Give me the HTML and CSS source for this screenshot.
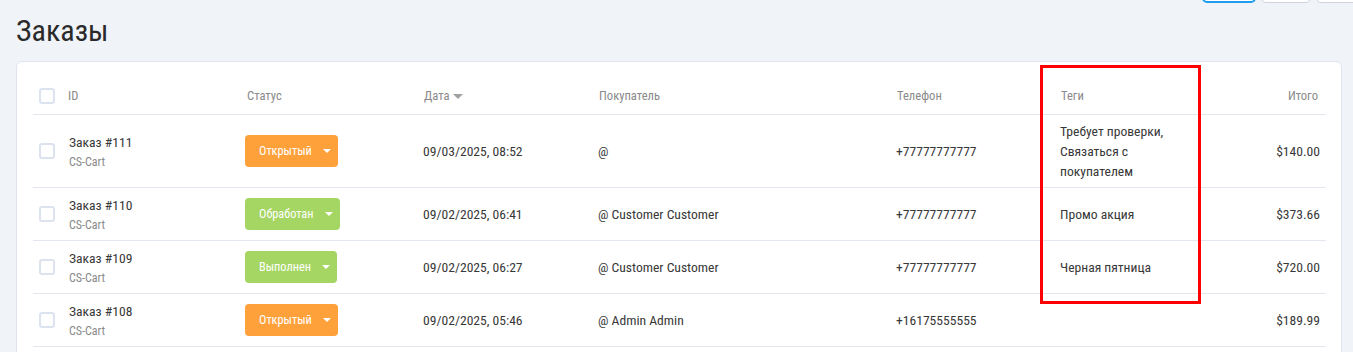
FILE: index.html
```html
<!DOCTYPE html>
<html lang="ru">
<head>
<meta charset="utf-8">
<title>Заказы</title>
<link rel="stylesheet" href="styles.css">
</head>
<body>
<div class="page">
  <div class="toolbar">
    <button class="tb-btn tb-active"></button>
    <button class="tb-btn"></button>
    <button class="tb-btn"></button>
  </div>
  <div class="title-row">
    <h1 class="title">Заказы</h1>
  </div>
  <div class="card">
    <table class="orders">
      <colgroup>
        <col class="w-check"><col class="w-id"><col class="w-status"><col class="w-date"><col class="w-buyer"><col class="w-phone"><col class="w-tags"><col class="w-total">
      </colgroup>
      <thead>
        <tr>
          <th class="cell-check"><span class="checkbox"></span></th>
          <th class="th-id">ID</th>
          <th>Статус</th>
          <th>Дата <span class="sort-caret"></span></th>
          <th>Покупатель</th>
          <th>Телефон</th>
          <th>Теги</th>
          <th class="right">Итого</th>
        </tr>
      </thead>
      <tbody>
        <tr>
          <td class="cell-check"><span class="checkbox"></span></td>
          <td><div class="order-name">Заказ #111</div><div class="order-sub">CS-Cart</div></td>
          <td><span class="status status-open">Открытый<span class="caret"></span></span></td>
          <td>09/03/2025, 08:52</td>
          <td>@</td>
          <td>+77777777777</td>
          <td class="tags">Требует проверки, Связаться с покупателем</td>
          <td class="right">$140.00</td>
        </tr>
        <tr>
          <td class="cell-check"><span class="checkbox"></span></td>
          <td><div class="order-name">Заказ #110</div><div class="order-sub">CS-Cart</div></td>
          <td><span class="status status-done">Обработан<span class="caret"></span></span></td>
          <td>09/02/2025, 06:41</td>
          <td>@ Customer Customer</td>
          <td>+77777777777</td>
          <td class="tags">Промо акция</td>
          <td class="right">$373.66</td>
        </tr>
        <tr>
          <td class="cell-check"><span class="checkbox"></span></td>
          <td><div class="order-name">Заказ #109</div><div class="order-sub">CS-Cart</div></td>
          <td><span class="status status-done">Выполнен<span class="caret"></span></span></td>
          <td>09/02/2025, 06:27</td>
          <td>@ Customer Customer</td>
          <td>+77777777777</td>
          <td class="tags">Черная пятница</td>
          <td class="right">$720.00</td>
        </tr>
        <tr>
          <td class="cell-check"><span class="checkbox"></span></td>
          <td><div class="order-name">Заказ #108</div><div class="order-sub">CS-Cart</div></td>
          <td><span class="status status-open">Открытый<span class="caret"></span></span></td>
          <td>09/02/2025, 05:46</td>
          <td>@ Admin Admin</td>
          <td>+16175555555</td>
          <td class="tags"></td>
          <td class="right">$189.99</td>
        </tr>
      </tbody>
    </table>
  </div>
</div>
<div class="highlight"></div>
</body>
</html>
```
FILE: styles.css
```css
* { box-sizing: border-box; }
html, body { margin: 0; padding: 0; }
body {
  background: #f0f3f8;
  font-family: Roboto, "Noto Sans", sans-serif;
  font-stretch: 85%;
  color: #383838;
  overflow: hidden;
}
.page {
  padding: 0 11px 0 16px;
}
.toolbar {
  display: flex;
  justify-content: flex-end;
  gap: 5px;
  margin: -29px -24px 0 0;
  height: 32px;
}
.tb-btn {
  width: 50px;
  height: 32px;
  background: #fff;
  border: 1px solid #cfd3d9;
  border-radius: 5px;
}
.tb-active {
  width: 54px;
  border: 2px solid #1e9cf0;
}
.title-row {
  display: flex;
  align-items: center;
  height: 59px;
  margin-top: -1px;
  padding-bottom: 2px;
}
.title {
  margin: 0;
  font-size: 30px;
  font-weight: 400;
  color: #2a2a2a;
  line-height: 40px;
}
.card {
  background: #fff;
  border: 1px solid #dfe4ee;
  border-radius: 6px;
  padding: 16px 15px 0 16px;
  height: 400px;
}
.orders {
  width: 100%;
  border-collapse: collapse;
  table-layout: fixed;
}
.w-check { width: 28px; }
.w-id { width: 177px; }
.w-status { width: 177px; }
.w-date { width: 175px; }
.w-buyer { width: 298px; }
.w-phone { width: 164px; }
.w-tags { width: 136px; }
.w-total { width: auto; }
.orders th {
  height: 36px;
  padding: 0 8px 0 9px;
  font-size: 12.6px;
  font-weight: 400;
  color: #8a8a8a;
  text-align: left;
  border-bottom: 1px solid #e2e6ee;
  vertical-align: middle;
}
.orders th.th-id { padding-left: 7px; }
.orders td {
  height: 53px;
  padding: 6px 6px 6px 8px;
  font-size: 13.6px;
  line-height: 20px;
  border-bottom: 1px solid #e2e6ee;
  vertical-align: middle;
}
.orders th.cell-check, .orders td.cell-check { padding: 0 0 0 6px; }
.orders .right { text-align: right; }
.checkbox {
  display: block;
  width: 16px;
  height: 16px;
  border: 2px solid #dde3ee;
  border-radius: 3px;
  background: #fff;
}
.sort-caret {
  display: inline-block;
  width: 0;
  height: 0;
  border-left: 5px solid transparent;
  border-right: 5px solid transparent;
  border-top: 5px solid #a0a0a0;
  vertical-align: middle;
  margin-left: 1px;
}
.order-name { font-size: 13.6px; line-height: 20px; }
.order-sub { font-size: 12px; line-height: 16px; color: #8a8a8a; margin-top: 2px; }
.status {
  display: inline-flex;
  align-items: center;
  height: 32px;
  margin-left: -1px;
  padding: 0 7px 0 14px;
  border-radius: 4px;
  color: #fff;
  font-size: 12.3px;
}
.status-open { background: #ffa13b; }
.status-done { background: #a5d663; }
.caret {
  width: 0;
  height: 0;
  border-left: 4px solid transparent;
  border-right: 4px solid transparent;
  border-top: 4px solid #fff;
  margin-left: 11px;
}
.tags { padding-right: 16px; }
.highlight {
  position: absolute;
  left: 1040px;
  top: 65px;
  width: 161px;
  height: 239px;
  border: 3px solid #ff0000;
  pointer-events: none;
}
```
